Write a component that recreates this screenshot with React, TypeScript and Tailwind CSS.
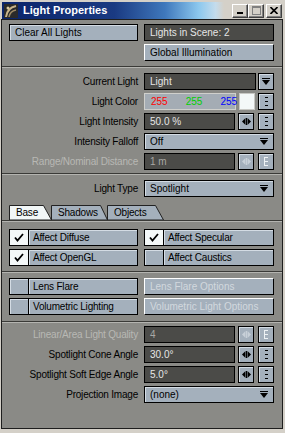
import type { ReactNode } from 'react';

const font = "font-['Liberation_Sans',Arial,sans-serif]";

function Separator() {
  return <div className="h-[2px] border-t border-[#3a3a37] bg-[#b4b4b0]" />;
}

function Spinner({ disabled }: { disabled?: boolean }) {
  const c = disabled ? '#c8d0d8' : '#000';
  return (
    <svg width="9" height="7" viewBox="0 0 9 7">
      <polygon points="0,3.5 3.5,0 3.5,7" fill={c} />
      <rect x="4" y="0" width="1" height="7" fill={c} />
      <polygon points="9,3.5 5.5,0 5.5,7" fill={c} />
    </svg>
  );
}

function Dots({ disabled }: { disabled?: boolean }) {
  const c = disabled ? '#eef2f4' : '#000';
  return (
    <svg width="5" height="9" viewBox="0 0 5 9">
      {disabled && <rect x="0" y="0" width="1" height="9" fill={c} />}
      <rect x="1" y="0" width="3" height="1" fill={c} />
      <rect x="1" y="4" width="3" height="1" fill={c} />
      <rect x="1" y="8" width="3" height="1" fill={c} />
    </svg>
  );
}

function Arrow() {
  return (
    <svg width="8" height="7" viewBox="0 0 8 7">
      <rect x="0" y="0" width="8" height="1" fill="#000" />
      <polygon points="0,2 8,2 4,7" fill="#000" />
    </svg>
  );
}

function Check() {
  return (
    <svg width="10" height="9" viewBox="0 0 10 9">
      <polyline points="1,4.5 3.5,7.5 9,1" fill="none" stroke="#000" strokeWidth="1.8" />
    </svg>
  );
}

const btn = 'bg-[#a4b0bc] border border-black shadow-[inset_1px_1px_0_#d4dce4]';
const iconBtn = `${btn} w-[16px] h-full flex items-center justify-center`;
const dark = 'bg-[#4b4b48] border border-black text-[#e6e6e6] flex items-center pl-[5px]';
const offBtn =
  'h-[17px] pl-[5px] leading-[15px] bg-[#a4b0bc] border border-t-white border-l-white border-r-black border-b-black';

function Row({ label, disabled, children }: { label: string; disabled?: boolean; children: ReactNode }) {
  return (
    <div className="flex h-[17px] gap-[6px]">
      <div
        className={`w-[129px] text-right leading-[17px] tracking-[-0.2px] whitespace-nowrap ${
          disabled ? 'text-[#b8b8b4]' : 'text-black'
        }`}
      >
        {label}
      </div>
      <div className="flex w-[130px] h-full">{children}</div>
    </div>
  );
}

function Dropdown({ value }: { value: string }) {
  return (
    <div className={`${btn} flex-1 h-full flex items-center justify-between pl-[5px] pr-[5px] text-black`}>
      <span>{value}</span>
      <Arrow />
    </div>
  );
}

function Numeric({ value, disabled }: { value: string; disabled?: boolean }) {
  return (
    <>
      <div className={`${dark} w-[91px] h-full ${disabled ? '!text-[#a8a8a4]' : ''}`}>{value}</div>
      <div className={`${iconBtn} ml-[3px]`}>
        <Spinner disabled={disabled} />
      </div>
      <div className={`${iconBtn} ml-[4px]`}>
        <Dots disabled={disabled} />
      </div>
    </>
  );
}

function CheckBtn({ label, checked }: { label: string; checked?: boolean }) {
  return (
    <div className="flex h-[17px] w-full border border-black bg-[#a4b0bc]">
      <div
        className={`w-[19px] h-full flex items-center justify-center border-r border-black ${
          checked ? 'bg-[#f4f8f8]' : 'bg-[#a4b0bc] shadow-[inset_1px_1px_0_#d4dce4]'
        }`}
      >
        {checked && <Check />}
      </div>
      <div className="flex-1 pl-[4px] leading-[15px] tracking-[-0.2px] shadow-[inset_1px_1px_0_#d4dce4] text-black">
        {label}
      </div>
    </div>
  );
}

function Tab({ label, width, active, slant }: { label: string; width: number; active?: boolean; slant: number }) {
  const w = width;
  return (
    <div className="relative h-[15px] -mr-[1px]" style={{ width: w }}>
      <svg className="absolute inset-0" width={w} height="15" viewBox={`0 0 ${w} 15`}>
        <polygon
          points={`0.5,15 0.5,0.5 ${w - slant - 0.5},0.5 ${w - 0.5},15`}
          fill={active ? '#f2f7f7' : '#a4b0bc'}
          stroke="#222"
          strokeWidth="1"
        />
      </svg>
      <span className="relative block pl-[7px] leading-[15px] text-black tracking-[-0.2px]">{label}</span>
    </div>
  );
}

function WinBtn({ children }: { children: ReactNode }) {
  return (
    <div className="w-[16px] h-[14px] bg-[#d4d0c8] border-t border-l border-white border-r border-b border-r-[#404040] border-b-[#404040] shadow-[inset_-1px_-1px_0_#808080] flex items-center justify-center">
      {children}
    </div>
  );
}

export default function App() {
  return (
    <div className={`w-[285px] h-[433px] bg-[#d4d0c8] flex flex-col ${font} text-[10px]`}>
      {/* title bar */}
      <div className="mt-[2px] mx-[2px] h-[17px] flex items-center bg-[linear-gradient(to_right,#0a246a_0%,#1a3a82_40%,#3f78bc_58%,#8cc8ee_70%,#c4dcec_76%,#d4d0c8_79%)]">
        <svg width="14" height="14" viewBox="0 0 14 14" className="ml-[2px]">
          <rect width="14" height="14" fill="#2a2a2a" />
          <path d="M2 13 Q3 4 12 2" stroke="#c8b48a" strokeWidth="2" fill="none" />
          <path d="M5 13 Q6 7 12 6" stroke="#a08c66" strokeWidth="1.5" fill="none" />
          <circle cx="4" cy="4" r="1.5" fill="#d8c8a0" />
        </svg>
        <span className="ml-[5px] text-[11px] font-bold text-white">Light Properties</span>
        <div className="ml-auto flex items-center mr-[1px]">
          <WinBtn>
            <div className="w-[6px] h-[2px] bg-black mt-[5px]" />
          </WinBtn>
          <WinBtn>
            <div className="w-[9px] h-[9px] border border-[#808080] border-t-2 border-t-[#808080]" />
          </WinBtn>
          <div className="ml-[2px]">
            <WinBtn>
              <svg width="8" height="7" viewBox="0 0 8 7">
                <path d="M0.5 0 L7.5 7 M7.5 0 L0.5 7" stroke="#000" strokeWidth="1.6" />
              </svg>
            </WinBtn>
          </div>
        </div>
      </div>

      {/* body */}
      <div className="ml-[1px] mr-[2px] mb-[4px] flex-1 border border-[#1e1e1e] bg-[#8a8a86] flex flex-col">
        <div className="pl-[7px] pr-[6px] pt-[4px] pb-[5px] grid grid-cols-[129px_130px] gap-x-[6px] gap-y-[3px]">
          <div className={`${btn} h-[17px] pl-[5px] leading-[15px] text-black`}>Clear All Lights</div>
          <div className={`${dark} h-[17px]`}>Lights in Scene: 2</div>
          <div />
          <div className={`${offBtn} text-black`}>Global Illumination</div>
        </div>
        <Separator />

        <div className="pl-[7px] pr-[6px] pt-[5px] pb-[3px] flex flex-col gap-[3px]">
          <Row label="Current Light">
            <div className={`${dark} w-[112px] h-full`}>Light</div>
            <div className={`${iconBtn} ml-[2px]`}>
              <Arrow />
            </div>
          </Row>
          <Row label="Light Color">
            <div className="w-[92px] h-full bg-[#a4acb4] border border-[#d0d0cc] flex items-center pl-[6px] gap-[18px]">
              <span className="text-[#ff0000]">255</span>
              <span className="text-[#00d000]">255</span>
              <span className="text-[#0000ff]">255</span>
            </div>
            <div className="w-[16px] h-full ml-[3px] bg-[#f4f8f8] border border-[#c8c8c4]" />
            <div className={`${iconBtn} ml-[3px]`}>
              <Dots />
            </div>
          </Row>
          <Row label="Light Intensity">
            <Numeric value="50.0 %" />
          </Row>
          <Row label="Intensity Falloff">
            <Dropdown value="Off" />
          </Row>
          <Row label="Range/Nominal Distance" disabled>
            <Numeric value="1 m" disabled />
          </Row>
        </div>
        <Separator />

        <div className="pl-[7px] pr-[6px] pt-[5px]">
          <Row label="Light Type">
            <Dropdown value="Spotlight" />
          </Row>
          <div className="flex mt-[8px]">
            <Tab label="Base" width={43} slant={8} active />
            <Tab label="Shadows" width={57} slant={7} />
            <Tab label="Objects" width={57} slant={8} />
          </div>
        </div>
        <Separator />
        <div className="pl-[7px] pr-[6px] pt-[7px] pb-[5px] grid grid-cols-[129px_130px] gap-x-[6px] gap-y-[3px]">
          <CheckBtn label="Affect Diffuse" checked />
          <CheckBtn label="Affect Specular" checked />
          <CheckBtn label="Affect OpenGL" checked />
          <CheckBtn label="Affect Caustics" />
        </div>
        <Separator />

        <div className="pl-[7px] pr-[6px] pt-[5px] pb-[6px] grid grid-cols-[129px_130px] gap-x-[6px] gap-y-[3px]">
          <CheckBtn label="Lens Flare" />
          <div className={`${offBtn} text-[#d2d8de]`}>Lens Flare Options</div>
          <CheckBtn label="Volumetric Lighting" />
          <div className={`${offBtn} text-[#d2d8de]`}>Volumetric Light Options</div>
        </div>
        <Separator />

        <div className="pl-[7px] pr-[6px] pt-[3px] flex flex-col gap-[3px]">
          <Row label="Linear/Area Light Quality" disabled>
            <Numeric value="4" disabled />
          </Row>
          <Row label="Spotlight Cone Angle">
            <Numeric value="30.0°" />
          </Row>
          <Row label="Spotlight Soft Edge Angle">
            <Numeric value="5.0°" />
          </Row>
          <Row label="Projection Image">
            <Dropdown value="(none)" />
          </Row>
        </div>
      </div>
    </div>
  );
}
